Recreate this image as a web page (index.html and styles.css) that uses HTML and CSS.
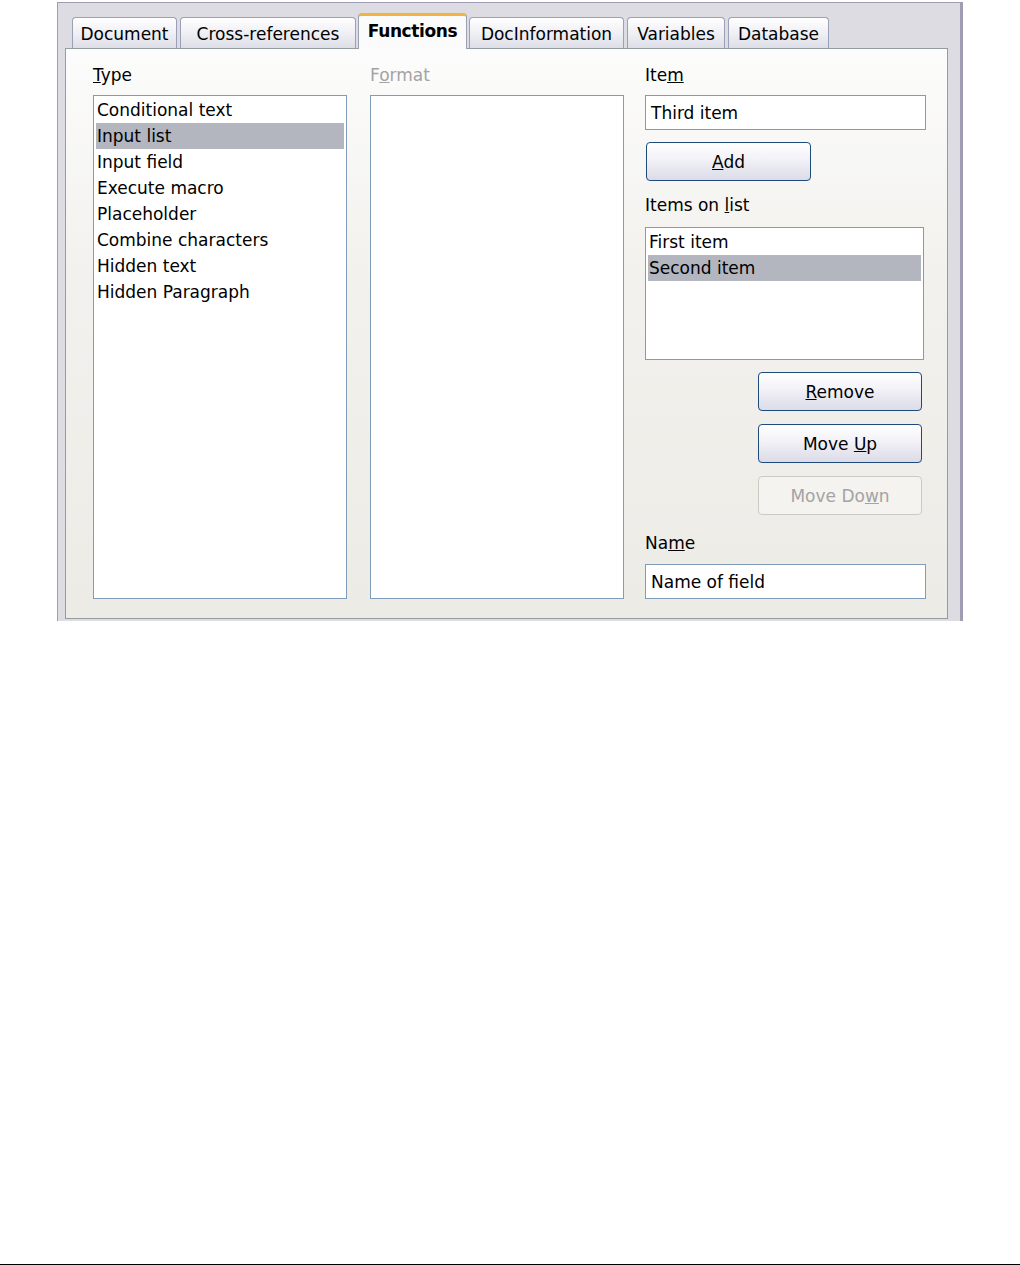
FILE: index.html
```html
<!DOCTYPE html>
<html lang="en">

<head>
    <meta charset="UTF-8">
    <title>Fields - Functions</title>
    <link rel="stylesheet" href="styles.css">
</head>

<body>
    <div class="page">
        <div class="dialog">
            <div class="tabs">
                <div class="tab doc">Document</div>
                <div class="tab xref">Cross-references</div>
                <div class="tab func active">Functions</div>
                <div class="tab info">DocInformation</div>
                <div class="tab vars">Variables</div>
                <div class="tab db">Database</div>
            </div>
            <div class="panel">
                <div class="column">
                    <div class="label"><u>T</u>ype</div>
                    <div class="listbox tall">
                        <div class="row">Conditional text</div>
                        <div class="row selected">Input list</div>
                        <div class="row">Input field</div>
                        <div class="row">Execute macro</div>
                        <div class="row">Placeholder</div>
                        <div class="row">Combine characters</div>
                        <div class="row">Hidden text</div>
                        <div class="row">Hidden Paragraph</div>
                    </div>
                </div>
                <div class="column">
                    <div class="label disabled">F<u>o</u>rmat</div>
                    <div class="listbox tall"></div>
                </div>
                <div class="column side">
                    <div class="label">Ite<u>m</u></div>
                    <div class="textbox">Third item</div>
                    <button class="btn add"><u>A</u>dd</button>
                    <div class="label items-label">Items on <u>l</u>ist</div>
                    <div class="listbox items">
                        <div class="row">First item</div>
                        <div class="row selected">Second item</div>
                    </div>
                    <button class="btn right first"><u>R</u>emove</button>
                    <button class="btn right">Move <u>U</u>p</button>
                    <button class="btn right" disabled>Move Do<u>w</u>n</button>
                    <div class="label name-label">Na<u>m</u>e</div>
                    <div class="textbox name">Name of field</div>
                </div>
            </div>
        </div>
        <div class="rule"></div>
    </div>
</body>

</html>
```

FILE: styles.css
```css
body {
    margin: 0;
    background: #ffffff;
    font-family: "DejaVu Sans", sans-serif;
    font-size: 17px;
    color: #000000;
}

.page {
    height: 1265px;
    display: flex;
    flex-direction: column;
}

.rule {
    margin-top: auto;
    height: 1px;
    background: #000000;
}

.dialog {
    margin: 2px 0 0 57px;
    width: 906px;
    height: 619px;
    box-sizing: border-box;
    border: 1px solid #9e9db4;
    border-right: 3px solid #9e9db4;
    border-bottom: none;
    background: #dddce3;
    padding: 9px 12px 0 7px;
}

/* tab strip */
.tabs {
    display: flex;
    align-items: flex-end;
    gap: 3px;
    padding-left: 7px;
    height: 36px;
    position: relative;
    z-index: 1;
}

.tab {
    height: 31px;
    line-height: 32px;
    border: 1px solid #9aa1b6;
    border-bottom: none;
    border-radius: 4px 4px 0 0;
    background: linear-gradient(#ffffff, #f1f1f6 45%, #dedee9);
    white-space: nowrap;
    text-align: center;
    box-sizing: border-box;
}

.tab.doc { width: 105px; }
.tab.xref { width: 176px; }
.tab.func { width: 107px; }
.tab.info { width: 155px; }
.tab.vars { width: 98px; }
.tab.db { width: 101px; }

.tab.active {
    height: 36px;
    line-height: 30px;
    margin: 0 -1px -1px;
    width: 109px;
    font-weight: bold;
    letter-spacing: -0.4px;
    border-top: 3px solid #f4b33c;
    background: #fbfbfb;
}

/* page body */
.panel {
    height: 571px;
    box-sizing: border-box;
    border: 1px solid #959ca0;
    background: linear-gradient(#fcfcfc, #f2f1ed 40%, #ecebe6);
    padding: 15px 21px 19px 27px;
    display: grid;
    grid-template-columns: 254px 254px 281px;
    column-gap: 23px;
}

.column {
    display: flex;
    flex-direction: column;
}

.column.side {
    margin-left: -2px;
}

.label {
    height: 22px;
    line-height: 22px;
    margin-bottom: 9px;
}

.label.disabled {
    color: #a3a3a3;
}

.listbox {
    border: 1px solid #7f9db9;
    background: #ffffff;
    box-sizing: border-box;
    padding: 1px 2px;
}

.listbox.tall {
    flex: 1;
}

.row {
    height: 26px;
    line-height: 27px;
    padding-left: 1px;
    white-space: nowrap;
}

.row.selected {
    background: #b3b5bf;
}

.textbox {
    width: 281px;
    height: 35px;
    line-height: 35px;
    box-sizing: border-box;
    border: 1px solid #7f9db9;
    background: #ffffff;
    padding-left: 5px;
}

.btn {
    font-family: inherit;
    font-size: 17px;
    color: #000000;
    height: 39px;
    border: 1px solid #1f4a7c;
    border-radius: 4px;
    background: linear-gradient(#ffffff, #f3f3f8 40%, #dcdbe8);
    padding: 0;
}

.btn.add {
    width: 165px;
    margin: 12px 0 0 1px;
}

.items-label {
    margin: 13px 0 11px;
}

.listbox.items {
    width: 279px;
    height: 133px;
}

.btn.right {
    align-self: flex-end;
    width: 164px;
    height: 39px;
    margin: 13px 6px 0 0;
}

.btn.right.first {
    margin-top: 12px;
}

.btn:disabled {
    color: #a3a3a3;
    border-color: #cbcbc4;
    background: #f4f3ef;
}

.name-label {
    margin: 17px 0 10px;
}
```
